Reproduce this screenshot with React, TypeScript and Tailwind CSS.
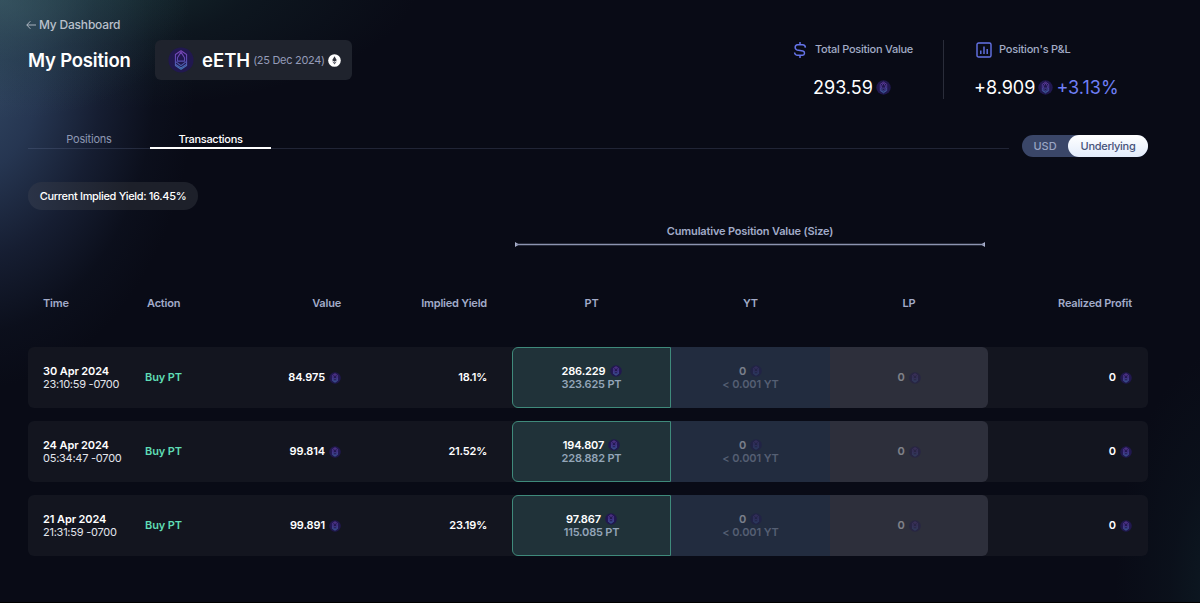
import clsx from 'clsx';

const transactions = [
  {
    date: '30 Apr 2024',
    time: '23:10:59 -0700',
    action: 'Buy PT',
    value: '84.975',
    impliedYield: '18.1%',
    pt: { value: '286.229', size: '323.625 PT' },
    yt: { value: '0', size: '< 0.001 YT' },
    lp: { value: '0' },
    profit: '0',
  },
  {
    date: '24 Apr 2024',
    time: '05:34:47 -0700',
    action: 'Buy PT',
    value: '99.814',
    impliedYield: '21.52%',
    pt: { value: '194.807', size: '228.882 PT' },
    yt: { value: '0', size: '< 0.001 YT' },
    lp: { value: '0' },
    profit: '0',
  },
  {
    date: '21 Apr 2024',
    time: '21:31:59 -0700',
    action: 'Buy PT',
    value: '99.891',
    impliedYield: '23.19%',
    pt: { value: '97.867', size: '115.085 PT' },
    yt: { value: '0', size: '< 0.001 YT' },
    lp: { value: '0' },
    profit: '0',
  },
];

const columns = 'grid grid-cols-[117px_80px_116px_171px_159px_159px_158px_1fr]';

function TokenIcon({ className }: { className?: string }) {
  return (
    <svg viewBox="0 0 28 28" fill="none" className={clsx('shrink-0', className)}>
      <defs>
        <linearGradient id="token" x1="14" y1="4" x2="14" y2="24" gradientUnits="userSpaceOnUse">
          <stop stopColor="#7c46b8" />
          <stop offset="0.5" stopColor="#5a49b0" />
          <stop offset="1" stopColor="#4277b4" />
        </linearGradient>
      </defs>
      <circle cx="14" cy="14" r="13.5" fill="#21184f" />
      <g stroke="url(#token)" strokeWidth="1.2" strokeLinejoin="round">
        <path d="m14 4 6 4v12l-6 4-6-4V8z" />
        <path d="m14 5.5-3.8 6v3.7h7.6v-3.7zM8 15.5l6 4.5 6-4.5M8 18.5l6 4 6-4" />
      </g>
    </svg>
  );
}

function EthBadge() {
  return (
    <svg viewBox="0 0 14 14" className="h-[13px] w-[13px] shrink-0">
      <circle cx="7" cy="7" r="6.8" fill="#fff" />
      <path d="m7 2.5 2.5 4.3L7 8.3 4.5 6.8z" fill="#30323c" />
      <path d="m4.5 7.7 2.5 3.6 2.5-3.6L7 9.1z" fill="#555863" />
    </svg>
  );
}

function DollarIcon() {
  return (
    <svg viewBox="0 0 14 16" fill="none" stroke="#6574e8" strokeWidth="1.5" className="h-4 w-3.5">
      <path d="M7 0v3M7 13v3" />
      <path d="M12.4 5.6A2.9 2.9 0 0 0 9.5 2.8h-5a2.6 2.6 0 0 0-.4 5.1l5.8 1.1a2.2 2.2 0 0 1-.3 4.3h-5a2.9 2.9 0 0 1-3-2.8" />
    </svg>
  );
}

function ChartIcon() {
  return (
    <svg viewBox="0 0 16 16" fill="none" stroke="#6574e8" strokeWidth="1.4" className="h-4 w-4">
      <rect x="1" y="1" width="14" height="14" rx="1.6" />
      <path d="M4.8 8.5V12M8 4.5V12M11.2 7v5" />
    </svg>
  );
}

function Amount({ value, className }: { value: string; className?: string }) {
  return (
    <div className={clsx('flex items-center gap-1', className)}>
      <span>{value}</span>
      <TokenIcon className="h-[12px] w-[12px]" />
    </div>
  );
}

function Header() {
  return (
    <header className="flex h-[99px] justify-between">
      <div>
        <a href="#" className="-ml-[2px] mt-[17px] flex h-4 items-center gap-[3px] text-[12px] font-medium tracking-[-0.2px] text-[#b9c0cb]">
          <svg viewBox="0 0 10 10" fill="none" stroke="currentColor" strokeWidth="0.9" className="h-[10px] w-[10px]">
            <path d="M10 5H.8M4.4 1.2.8 5l3.6 3.8" />
          </svg>
          My Dashboard
        </a>
        <div className="mt-[7px] flex items-center">
          <h1 className="w-[127px] pt-px text-[18.5px] font-semibold tracking-[-0.2px] text-white">My Position</h1>
          <div className="flex h-10 w-[197px] items-center rounded-md bg-[#1f232d] pl-[13px]">
            <TokenIcon className="h-[26px] w-[26px]" />
            <span className="ml-2 pt-px text-[18.5px] font-semibold text-white">eETH</span>
            <span className="ml-[3px] mr-[3px] text-[11px] tracking-[-0.3px] text-[#949bb8]">(25 Dec 2024)</span>
            <EthBadge />
          </div>
        </div>
      </div>

      <div className="mt-10 flex h-[59px]">
        <div className="w-[150px]">
          <div className="flex h-[19px] items-center gap-2 text-[11px] font-medium tracking-[-0.25px] text-[#a3abc6]">
            <DollarIcon />
            Total Position Value
          </div>
          <div className="mt-[15px] flex items-center gap-[3px] pl-[20px] text-[18px] text-white">
            293.59
            <TokenIcon className="h-[15px] w-[15px]" />
          </div>
        </div>
        <div className="w-[205px] border-l border-[#2a2d3a] pl-8">
          <div className="flex h-[19px] items-center gap-[7px] text-[11px] font-medium tracking-[-0.2px] text-[#a3abc6]">
            <ChartIcon />
            Position's P&amp;L
          </div>
          <div className="-ml-[2px] mt-[15px] flex items-center gap-[3px] whitespace-nowrap text-[18px] text-white">
            +8.909
            <TokenIcon className="h-[15px] w-[15px]" />
            <span className="text-[#6f7ff5]">+3.13%</span>
          </div>
        </div>
      </div>
    </header>
  );
}

function Tabs() {
  return (
    <div className="mt-[31px] flex h-7 items-start justify-between">
      <div className="flex h-[19px] w-[981px] border-b border-[#8290b8]/20 text-center text-[11px] leading-[18px]">
        <button className="w-[122px] tracking-[-0.2px] text-[#8e98b3]">Positions</button>
        <button className="h-[19px] w-[121px] border-b-2 border-white font-medium tracking-[-0.3px] text-white">Transactions</button>
      </div>
      <div className="mt-[5px] flex h-[22px] w-[126px] rounded-full bg-[#3a4668] text-[11px] font-medium">
        <button className="w-[46px] text-[#9aa5c4]">USD</button>
        <button className="w-20 rounded-full bg-linear-to-b from-white to-[#e3ecfb] tracking-[-0.3px] text-[#46527a]">Underlying</button>
      </div>
    </div>
  );
}

function TableHead() {
  return (
    <div className={clsx(columns, 'mt-[48px] h-4 items-center text-[11px] font-semibold tracking-[-0.2px] text-[#a2abc9]')}>
      <div className="pl-[15px]">Time</div>
      <div className="pl-[2px]">Action</div>
      <div className="text-right">Value</div>
      <div className="pr-[25px] text-right">Implied Yield</div>
      <div className="text-center">PT</div>
      <div className="text-center">YT</div>
      <div className="text-center">LP</div>
      <div className="pr-4 text-right">Realized Profit</div>
    </div>
  );
}

export default function App() {
  return (
    <div className="h-[603px] w-full overflow-hidden border-b border-black bg-[#090b16] bg-[radial-gradient(ellipse_190px_120px_at_0px_0px,rgba(70,104,112,0.5),rgba(54,84,96,0.22)_50%,transparent),radial-gradient(ellipse_330px_130px_at_90px_-20px,rgba(38,80,78,0.5),rgba(26,54,56,0.26)_50%,transparent),radial-gradient(ellipse_225px_310px_at_-30px_80px,rgba(56,80,110,0.88),rgba(46,66,98,0.78)_30%,rgba(36,50,80,0.48)_58%,rgba(24,36,58,0.16)_82%,transparent),radial-gradient(ellipse_110px_240px_at_1225px_590px,rgba(22,56,62,0.35),rgba(18,40,48,0.18)_50%,transparent)] pl-[28px] pr-[52px] font-['Inter',sans-serif]">
      <Header />
      <Tabs />

      <div className="mt-6 flex h-7 w-[170px] items-center justify-center rounded-full bg-linear-to-r from-[#2a3347] to-[#1d202a] to-60% text-[11px] font-medium tracking-[-0.33px] text-white">
        Current Implied Yield: 16.45%
      </div>

      <div className="ml-[487px] mt-[13px] w-[470px] text-center text-[11px] font-semibold tracking-[-0.17px] text-[#a2abc9]">
        <div className="h-4 leading-4">Cumulative Position Value (Size)</div>
        <svg viewBox="0 0 470 5" className="mt-[3px] h-[5px] w-full">
          <path d="M0 0v5l4-2.5zM470 0v5l-4-2.5z" fill="#aab1cd" />
          <path d="M1 2.5h468" stroke="#8d94b0" strokeWidth="1.3" />
        </svg>
      </div>

      <TableHead />

      <div className="mt-9 flex flex-col gap-[13px]">
        {transactions.map((tx) => (
          <div
            key={tx.date}
            className={clsx(columns, 'h-[61px] items-center rounded-md bg-[#13151f] text-[11px] font-semibold tracking-[-0.1px] text-white')}
          >
            <div className="pl-[15px] leading-[13px]">
              <div>{tx.date}</div>
              <div className="font-normal tracking-[-0.25px] text-[#e3e5ec]">{tx.time}</div>
            </div>
            <div className="text-[#5fdcb5]">{tx.action}</div>
            <Amount value={tx.value} className="justify-end" />
            <div className="pr-[25px] text-right tracking-[-0.2px]">{tx.impliedYield}</div>
            <div className="flex h-full flex-col items-center justify-center rounded-l-md border border-[#3f8a7b] bg-[#203239] leading-[13px]">
              <Amount value={tx.pt.value} />
              <div className="tracking-[-0.2px] text-[#93a5b8]">{tx.pt.size}</div>
            </div>
            <div className="flex h-full flex-col items-center justify-center bg-[#222c3f] leading-[13px]">
              <Amount value={tx.yt.value} className="opacity-40" />
              <div className="text-[#555f73]">{tx.yt.size}</div>
            </div>
            <div className="flex h-full items-center justify-center rounded-r-md bg-[#2d2f3b]">
              <Amount value={tx.lp.value} className="opacity-40" />
            </div>
            <Amount value={tx.profit} className="justify-end pr-4" />
          </div>
        ))}
      </div>
    </div>
  );
}
